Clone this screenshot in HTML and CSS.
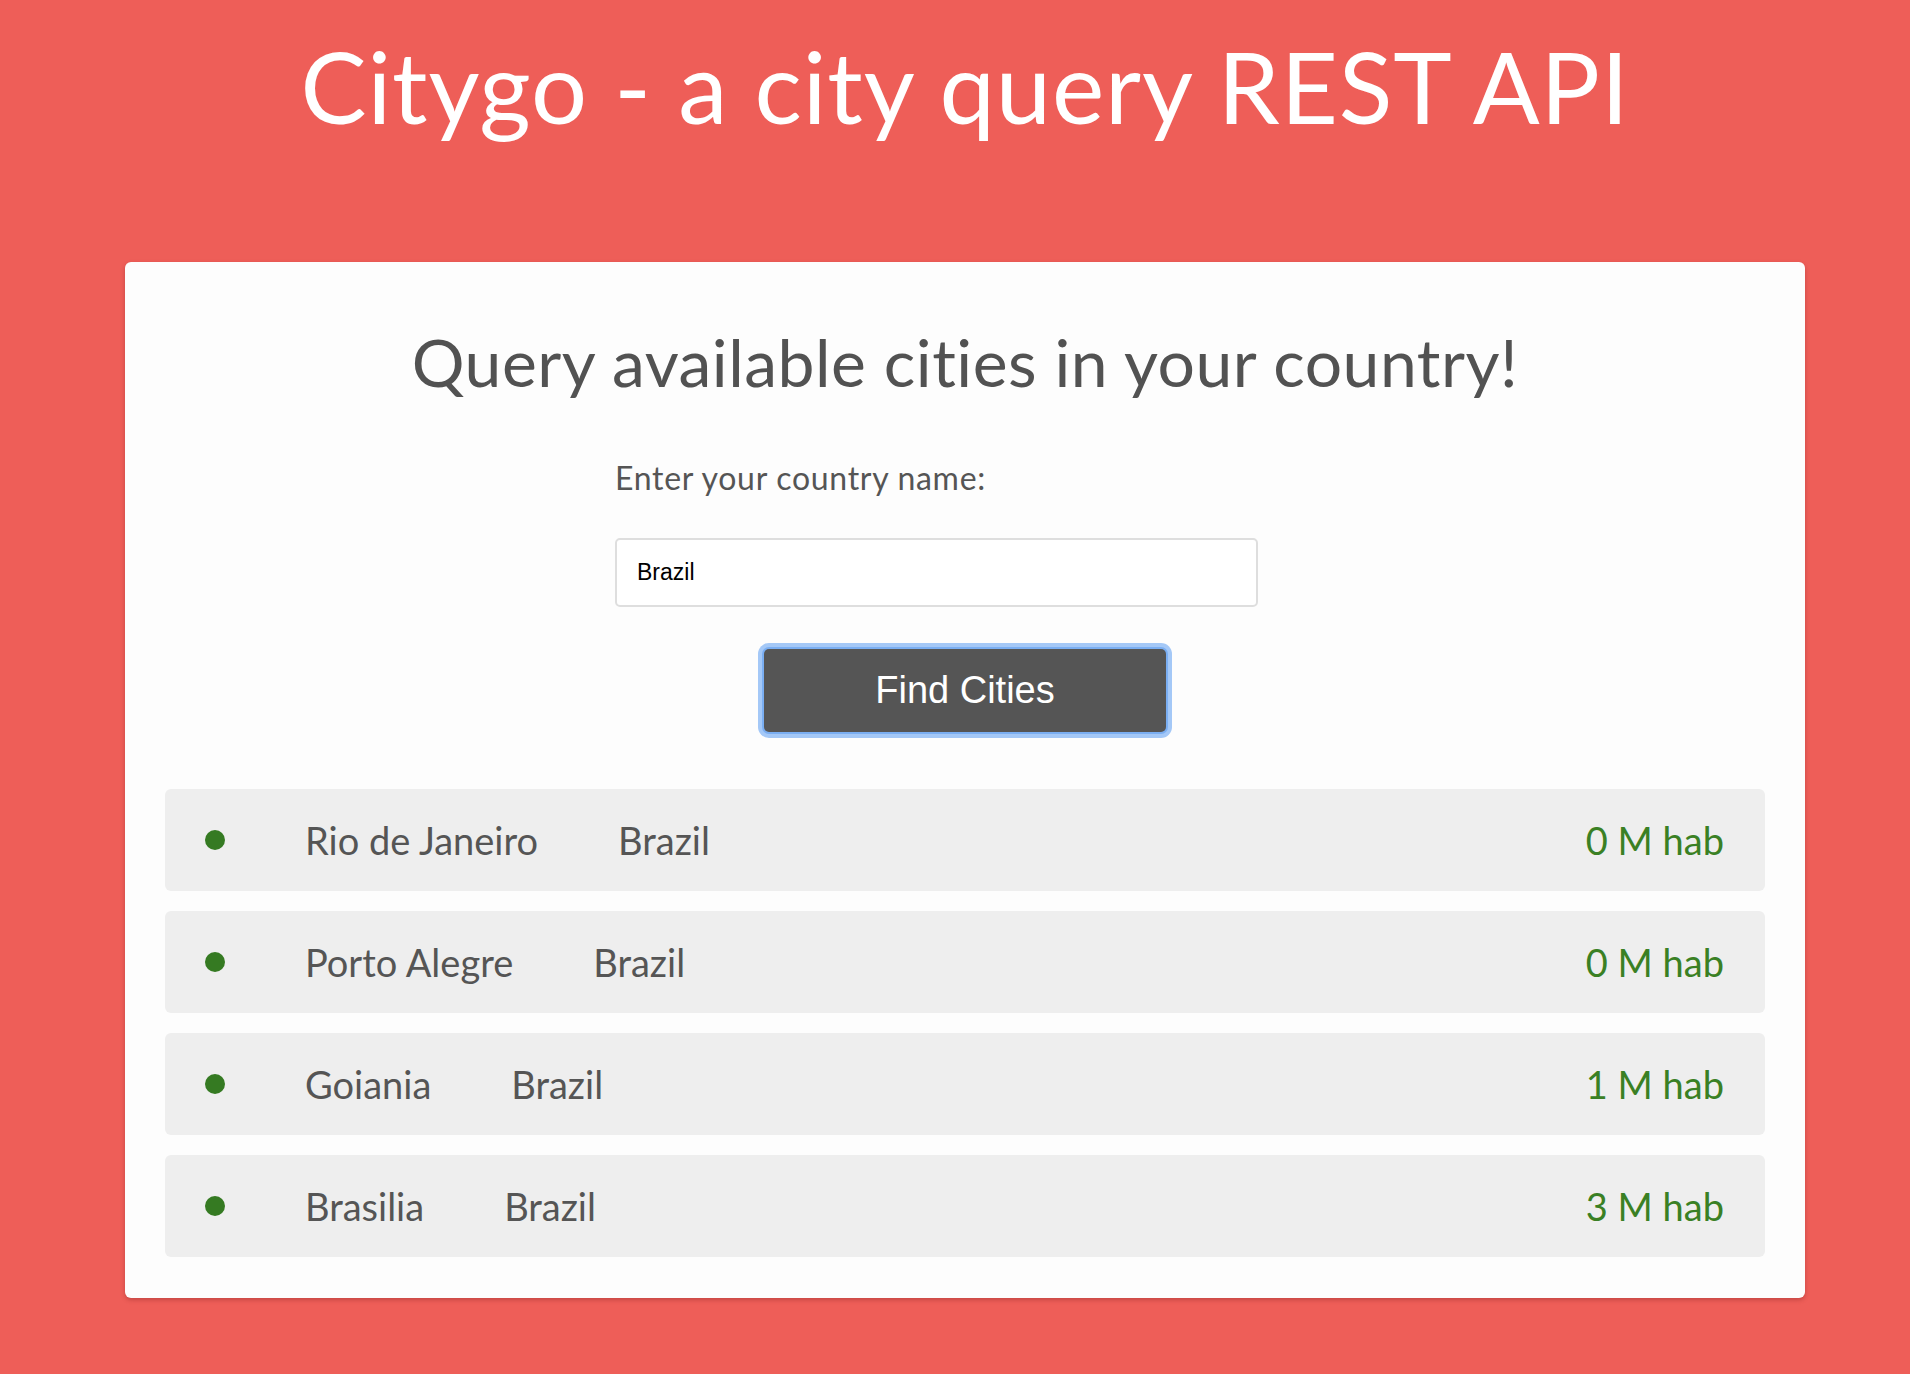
FILE: index.html
```html
<!DOCTYPE html>
<html lang="en">
<head>
<meta charset="utf-8">
<title>Citygo</title>
<link rel="stylesheet" href="styles.css">
</head>
<body>
<div class="page">
  <header class="top">
    <h1 class="title">Citygo - a city query REST API</h1>
  </header>
  <main class="card">
    <h2 class="heading">Query available cities in your country!</h2>
    <form class="form">
      <label class="label" for="country">Enter your country name:</label>
      <input class="input" id="country" type="text" value="Brazil">
      <div class="actions">
        <button class="btn" type="button">Find Cities</button>
      </div>
    </form>
    <ul class="list">
      <li class="row"><span class="dot"></span><span class="city">Rio de Janeiro</span><span class="country">Brazil</span><span class="pop">0 M hab</span></li>
      <li class="row"><span class="dot"></span><span class="city">Porto Alegre</span><span class="country">Brazil</span><span class="pop">0 M hab</span></li>
      <li class="row"><span class="dot"></span><span class="city">Goiania</span><span class="country">Brazil</span><span class="pop">1 M hab</span></li>
      <li class="row"><span class="dot"></span><span class="city">Brasilia</span><span class="country">Brazil</span><span class="pop">3 M hab</span></li>
    </ul>
  </main>
</div>
</body>
</html>
```
FILE: styles.css
```css
html, body {
  margin: 0;
  padding: 0;
}
body {
  background: #ee5e58;
  font-family: Lato, "Open Sans", sans-serif;
  height: 1374px;
  overflow: hidden;
}
.page {
  width: 1680px;
  margin-left: 125px;
}
.top {
  text-align: center;
  padding-top: 24px;
  height: 262px;
  box-sizing: border-box;
}
.title {
  margin: 0;
  font-weight: 400;
  color: #ffffff;
  font-size: 99px;
  line-height: 124px;
  letter-spacing: 0.9px;
}
.card {
  background: #fdfdfd;
  border-radius: 6px;
  box-shadow: 0 2px 4px rgba(120, 30, 30, 0.35);
  padding: 60px 40px 40px;
  box-sizing: border-box;
  height: 1036px;
}
.heading {
  margin: 0;
  text-align: center;
  font-weight: 400;
  color: #525252;
  font-size: 66px;
  line-height: 80px;
  letter-spacing: 0.5px;
}
.form {
  width: 700px;
  margin: 0 auto;
  padding-top: 58px;
}
.label {
  display: block;
  color: #555555;
  font-size: 32px;
  line-height: 36px;
  letter-spacing: 0.7px;
}
.input {
  display: block;
  margin-top: 42px;
  width: 643px;
  height: 69px;
  box-sizing: border-box;
  border: 2px solid #dedede;
  border-radius: 5px;
  background: #ffffff;
  padding: 0 20px;
  font-family: "Liberation Sans", Arial, sans-serif;
  font-size: 23px;
  color: #000000;
  outline: none;
}
.actions {
  display: flex;
  justify-content: center;
  padding-top: 42px;
}
.btn {
  width: 402px;
  height: 83px;
  border: none;
  border-radius: 5px;
  background: #555555;
  color: #ffffff;
  font-family: "Liberation Sans", Arial, sans-serif;
  font-size: 38px;
  box-shadow: 0 0 0 2px #7aaef2, 0 0 0 6px #a4c8f7;
  cursor: pointer;
}
.list {
  list-style: none;
  margin: 57px 0 0;
  padding: 0;
  display: flex;
  flex-direction: column;
  gap: 20px;
}
.row {
  display: flex;
  align-items: center;
  height: 102px;
  background: #eeeeee;
  border-radius: 6px;
  padding: 0 41px 0 40px;
  color: #555555;
  font-size: 38px;
}
.dot {
  width: 20px;
  height: 20px;
  border-radius: 50%;
  background: #357a22;
  flex: none;
}
.city {
  margin-left: 80px;
}
.country {
  margin-left: 80px;
}
.pop {
  margin-left: auto;
  color: #3a8024;
}
```
